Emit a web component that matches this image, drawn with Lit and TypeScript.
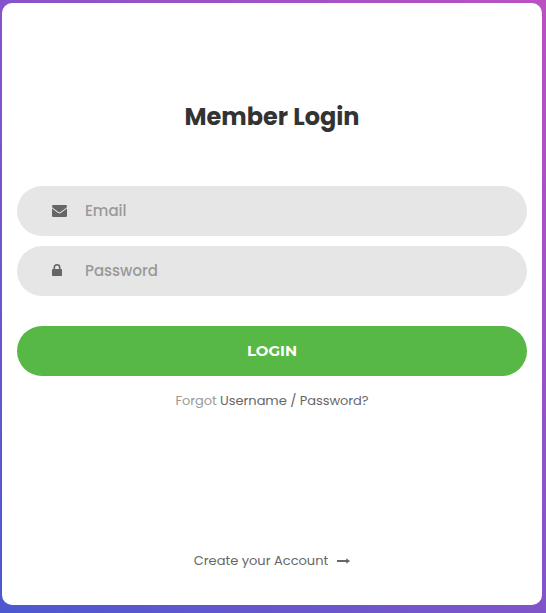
import { LitElement, html, css, svg } from "lit";
import { customElement, property } from "lit/decorators.js";

const envelope = svg`<svg class="icon" width="15" height="12" viewBox="0 0 15 12" fill="currentColor">
  <path d="M0 3.5V10.7Q0 12 1.3 12H13.7Q15 12 15 10.7V3.5L9.2 7.7Q8.2 8.5 7.5 8.5Q6.8 8.5 5.8 7.7Z"/>
  <path d="M1.3 0H13.7Q15 0 15 1.2Q15 2.3 13.8 3.2L8.8 6.8Q8 7.4 7.5 7.4Q7 7.4 6.2 6.8L1.2 3.2Q0 2.3 0 1.2Q0 0 1.3 0Z"/>
</svg>`;

const lock = svg`<svg class="icon lock" width="10" height="12" viewBox="0 0 10 12">
  <path d="M2.3 6V3.5A2.7 2.7 0 0 1 7.7 3.5V6" fill="none" stroke="currentColor" stroke-width="1.6"/>
  <rect x="0" y="5" width="10" height="7" rx=".8" fill="currentColor"/>
</svg>`;

@customElement("login-field")
export class LoginField extends LitElement {
  @property() type = "text";
  @property() label = "";

  static styles = css`
    :host { display: block; }
    .field {
      box-sizing: border-box;
      display: flex;
      align-items: center;
      height: 50px;
      padding: 0 30px 0 35px;
      border-radius: 25px;
      background: #e6e6e6;
      color: #666;
    }
    .mark { display: flex; width: 33px; flex: none; }
    .icon { display: block; }
    .lock { margin-bottom: 2px; }
    input {
      box-sizing: border-box;
      flex: 1;
      min-width: 0;
      height: 50px;
      padding: 0 0 2px;
      border: 0;
      outline: 0;
      background: transparent;
      font: 500 15px/22px Poppins, Inter, sans-serif;
      color: #666;
    }
    input::placeholder { color: #999; opacity: 1; }
  `;

  render() {
    return html`<label class="field">
      <span class="mark">${this.type === "password" ? lock : envelope}</span>
      <input type=${this.type} placeholder=${this.label} />
    </label>`;
  }
}

@customElement("app-root")
export class AppRoot extends LitElement {
  static styles = css`
    :host {
      display: block;
      box-sizing: border-box;
      height: 613px;
      padding: 3px 4px 8px 2px;
      background: linear-gradient(-135deg, #bb50c2, #4c58d0);
      font-family: Poppins, Inter, sans-serif;
    }
    .card {
      box-sizing: border-box;
      display: flex;
      flex-direction: column;
      height: 602px;
      padding: 99px 15px 34px;
      border-radius: 10px;
      background: #fff;
    }
    h1 {
      margin: 0 0 55px;
      font-size: 24px;
      line-height: 29px;
      font-weight: 700;
      text-align: center;
      color: #333;
    }
    .fields { display: grid; gap: 10px; }
    button {
      height: 50px;
      margin: 30px 0 0;
      padding: 0;
      border: 0;
      border-radius: 25px;
      background: #57b846;
      color: #fff;
      font: 700 15px/22px Montserrat, Inter, sans-serif;
    }
    .forgot, .create {
      font-size: 13px;
      line-height: 20px;
      text-align: center;
      color: #999;
    }
    .forgot { margin-top: 15px; letter-spacing: -0.05px; }
    a { color: #666; text-decoration: none; }
    .create { margin-top: auto; }
    .create a { display: inline-flex; align-items: center; gap: 9px; }
    .arrow { display: block; }
  `;

  render() {
    return html`<form class="card">
      <h1>Member Login</h1>
      <div class="fields">
        <login-field type="email" label="Email"></login-field>
        <login-field type="password" label="Password"></login-field>
      </div>
      <button type="button">LOGIN</button>
      <div class="forgot">Forgot <a href="#">Username / Password?</a></div>
      <div class="create">
        <a href="#"><span>Create your Account</span>
          <svg class="arrow" width="13" height="6" viewBox="0 0 13 6" fill="currentColor">
            <path d="M0 2H9.3V0.2L13 3L9.3 5.8V4H0Z"/>
          </svg></a>
      </div>
    </form>`;
  }
}
